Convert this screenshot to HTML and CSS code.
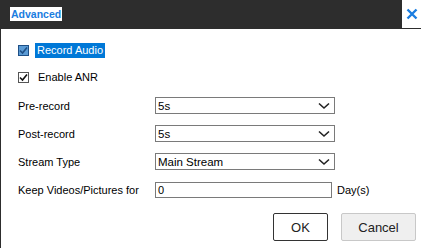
FILE: index.html
```html
<!DOCTYPE html>
<html lang="en">
<head>
    <meta charset="UTF-8">
    <title>Advanced</title>
    <link rel="stylesheet" href="styles.css">
</head>
<body>
    <div class="dialog">
        <div class="header">
            <span class="title">Advanced</span>
            <span class="close">
                <svg width="12" height="12" viewBox="0 0 12 12">
                    <path d="M1.5 1.5 L10.5 10.5 M10.5 1.5 L1.5 10.5" stroke="#1a7de0" stroke-width="2.4" fill="none"/>
                </svg>
            </span>
        </div>
        <div class="content">
            <div class="check-row">
                <span class="box selected">
                    <svg width="9" height="9" viewBox="0 0 9 9"><path d="M1 4.5 L3.5 7 L8 1.5" stroke="#1e4f86" stroke-width="1.6" fill="none"/></svg>
                </span>
                <span class="check-label highlight">Record Audio</span>
            </div>
            <div class="check-row">
                <span class="box">
                    <svg width="9" height="9" viewBox="0 0 9 9"><path d="M1 4.5 L3.5 7 L8 1.5" stroke="#111" stroke-width="1.6" fill="none"/></svg>
                </span>
                <span class="check-label">Enable ANR</span>
            </div>

            <div class="form-row">
                <span class="label">Pre-record</span>
                <div class="select"><span>5s</span><svg width="12" height="8" viewBox="0 0 12 8"><path d="M1 1.5 L6 6 L11 1.5" stroke="#222" stroke-width="1.6" fill="none"/></svg></div>
            </div>
            <div class="form-row">
                <span class="label">Post-record</span>
                <div class="select"><span>5s</span><svg width="12" height="8" viewBox="0 0 12 8"><path d="M1 1.5 L6 6 L11 1.5" stroke="#222" stroke-width="1.6" fill="none"/></svg></div>
            </div>
            <div class="form-row">
                <span class="label">Stream Type</span>
                <div class="select"><span>Main Stream</span><svg width="12" height="8" viewBox="0 0 12 8"><path d="M1 1.5 L6 6 L11 1.5" stroke="#222" stroke-width="1.6" fill="none"/></svg></div>
            </div>
            <div class="form-row">
                <span class="label">Keep Videos/Pictures for</span>
                <div class="input">0</div>
                <span class="unit">Day(s)</span>
            </div>
        </div>
        <div class="buttons">
            <button class="btn ok">OK</button>
            <button class="btn cancel">Cancel</button>
        </div>
    </div>
</body>
</html>
```

FILE: styles.css
```css
/* General Styles */
body {
    margin: 0;
    font-family: "Liberation Sans", Arial, sans-serif;
    font-size: 11px;
    color: #000;
    background: #fff;
}

.dialog {
    width: 421px;
    height: 248px;
    box-sizing: border-box;
    border-left: 1px solid #2d2d2d;
    background: #fff;
    display: flex;
    flex-direction: column;
}

.header {
    height: 29px;
    background: #2d2d2d;
    display: flex;
    align-items: flex-start;
    justify-content: space-between;
}

.title {
    margin: 7px 0 0 9px;
    background: #fff;
    color: #1a7de0;
    font-weight: bold;
    font-size: 10.5px;
    line-height: 14px;
    padding: 0 1px;
}

.close {
    width: 19px;
    height: 28px;
    background: #fff;
    display: flex;
    align-items: center;
    justify-content: center;
}

.content {
    padding: 14px 0 0 16px;
}

.check-row {
    display: flex;
    align-items: center;
    height: 15px;
    margin-bottom: 12px;
}

.box {
    width: 11px;
    height: 11px;
    box-sizing: border-box;
    border: 1px solid #555;
    background: #fff;
    display: flex;
    align-items: center;
    justify-content: center;
    margin-left: 1px;
}

.box.selected {
    border-color: #1e4f86;
    background: #5b9bd5;
}

.check-label {
    margin-left: 8px;
    line-height: 15px;
    padding: 0 1px;
}

.check-label.highlight {
    margin-left: 6px;
    padding: 0 2px;
    background: #0078d7;
    color: #fff;
}

.form-row {
    display: flex;
    align-items: center;
    height: 17px;
    margin-top: 11px;
}

.check-row + .form-row {
    margin-top: 0;
}

.label {
    width: 137px;
    padding-left: 1px;
}

.select {
    width: 180px;
    height: 17px;
    box-sizing: border-box;
    border: 1px solid #7a7a7a;
    display: flex;
    align-items: center;
    justify-content: space-between;
    padding: 0 4px 0 2px;
    font-size: 11.5px;
}

.input {
    width: 177px;
    height: 16px;
    box-sizing: border-box;
    border: 1px solid #7a7a7a;
    line-height: 14px;
    padding-left: 2px;
}

.unit {
    margin-left: 5px;
}

.buttons {
    margin-top: auto;
    margin-bottom: 7px;
    display: flex;
    justify-content: flex-end;
    gap: 13px;
    padding-right: 5px;
}

.btn {
    height: 28px;
    font-family: "Liberation Sans", Arial, sans-serif;
    font-size: 13px;
    color: #222;
    border-radius: 2px;
}

.btn.ok {
    width: 55px;
    background: #fff;
    border: 1px solid #333;
}

.btn.cancel {
    width: 75px;
    background: #efefef;
    border: 1px solid #c8c8c8;
}
```
